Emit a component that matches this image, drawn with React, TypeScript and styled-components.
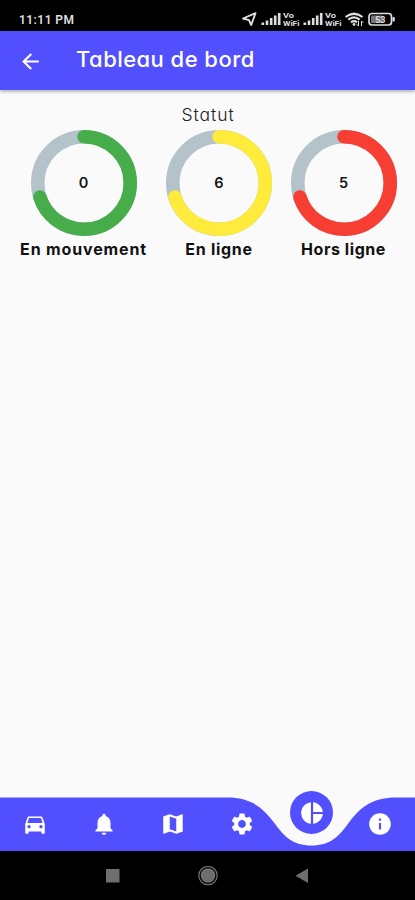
import React from 'react';
import styled, { createGlobalStyle } from 'styled-components';
import {
  MdArrowBack,
  MdDirectionsCar,
  MdInfo,
  MdMap,
  MdNotifications,
  MdPieChart,
  MdSettings,
} from 'react-icons/md';

const GlobalStyle = createGlobalStyle`
  * { box-sizing: border-box; }
  body { margin: 0; background: #fafafa; }
`;

const Screen = styled.div`
  width: 415px;
  height: 900px;
  display: flex;
  flex-direction: column;
  overflow: hidden;
  background: #fafafa;
  font-family: Inter, 'Noto Sans', sans-serif;
  font-feature-settings: 'cv11' 1;
`;

const StatusBar = styled.div`
  height: 31px;
  flex: none;
  display: flex;
  align-items: flex-end;
  justify-content: space-between;
  padding: 0 19px 3px 19px;
  background: #000;
  color: #dedede;
`;

const Clock = styled.span`
  font: 600 12px/15px Roboto, sans-serif;
  letter-spacing: 0.45px;
`;

const StatusIcons = styled.svg`
  display: block;
  width: 155px;
  height: 17px;
`;

const AppBar = styled.header`
  height: 59px;
  flex: none;
  display: flex;
  align-items: center;
  padding: 2px 0 0 18px;
  background: #524fff;
  color: #fff;
  box-shadow: 0 1px 4px rgba(0, 0, 0, 0.4);
  z-index: 1;

  svg { width: 25px; height: 25px; }
`;

const Title = styled.h1`
  margin: -5px 0 0 33px;
  font-size: 22px;
  line-height: 28px;
  font-weight: 500;
  letter-spacing: 0.45px;
  white-space: nowrap;
`;

const Content = styled.main`
  flex: 1;
  padding: 13px 0 0 1px;
`;

const SectionTitle = styled.h2`
  margin: 0;
  height: 27px;
  text-align: center;
  font-size: 17.5px;
  line-height: 24px;
  font-weight: 300;
  letter-spacing: 0.95px;
  color: #222;
`;

const Gauges = styled.div`
  display: flex;
  justify-content: space-evenly;
`;

const Gauge = styled.div<{ $width: number }>`
  width: ${(p) => p.$width}px;
  display: flex;
  flex-direction: column;
  align-items: center;
`;

const Dial = styled.div`
  display: grid;
  place-items: center;
  width: 106px;
  height: 106px;

  > * { grid-area: 1 / 1; }
`;

const Value = styled.span`
  font-size: 14.5px;
  line-height: 20px;
  font-weight: 600;
  color: #151515;
`;

const Label = styled.span<{ $spacing: number }>`
  margin-top: 2px;
  font-size: 16px;
  line-height: 22px;
  font-weight: 700;
  letter-spacing: ${(p) => p.$spacing}px;
  white-space: nowrap;
  color: #111;
`;

const NavBar = styled.nav`
  position: relative;
  height: 53.4px;
  flex: none;
`;

const NavShape = styled.svg`
  position: absolute;
  inset: 0;
  width: 415px;
  height: 54px;
`;

const NavItems = styled.div`
  position: relative;
  height: 100%;
  display: grid;
  grid-template-columns: repeat(6, 1fr);
  align-items: center;
  justify-items: center;
  color: #fff;

  svg { width: 26px; height: 26px; }
`;

const ActiveItem = styled.div`
  display: grid;
  place-items: center;
  width: 43px;
  height: 43px;
  margin: -23px 0 0 1px;
  border-radius: 50%;
  background: #524fff;
`;

const SystemBar = styled.div`
  height: 49.3px;
  flex: none;
  background: #000;

  svg { display: block; }
`;

const RADIUS = 46.25;
const LENGTH = 2 * Math.PI * RADIUS;

const gauges = [
  { label: 'En mouvement', value: 0, color: '#47ad4b', width: 128, spacing: 0.85 },
  { label: 'En ligne', value: 6, color: '#ffeb3b', width: 106, spacing: 0.7 },
  { label: 'Hors ligne', value: 5, color: '#f73e32', width: 106, spacing: 0.55 },
];

function Ring({ color }: { color: string }) {
  return (
    <svg width="106" height="106" viewBox="0 0 106 106" fill="none" strokeWidth="13.5">
      <circle cx="53" cy="53" r={RADIUS} stroke="#b3c3c9" />
      <circle
        cx="53"
        cy="53"
        r={RADIUS}
        stroke={color}
        strokeLinecap="round"
        strokeDasharray={`${LENGTH * 0.7} ${LENGTH}`}
        transform="rotate(-90 53 53)"
      />
    </svg>
  );
}

function Signal({ x }: { x: number }) {
  return (
    <g transform={`translate(${x} 0)`} fill="#dedede">
      <rect x="0" y="11.5" width="2.6" height="2.5" />
      <rect x="4.2" y="9.5" width="2.6" height="4.5" />
      <rect x="8.4" y="7" width="2.6" height="7" />
      <rect x="12.4" y="4.5" width="2.6" height="9.5" />
      <rect x="16.4" y="2" width="2.6" height="12" />
    </g>
  );
}

function VoWifi({ x }: { x: number }) {
  return (
    <g fill="#dedede" fontFamily="Roboto, sans-serif" fontWeight="700">
      <text x={x} y="6.6" fontSize="7.5" textLength="11" lengthAdjust="spacingAndGlyphs">Vo</text>
      <text x={x} y="14.5" fontSize="7.5" textLength="16.5" lengthAdjust="spacingAndGlyphs">WiFi</text>
    </g>
  );
}

export default function App() {
  return (
    <>
      <GlobalStyle />
      <Screen>
        <StatusBar>
          <Clock>11:11 PM</Clock>
          <StatusIcons viewBox="0 0 155 17">
            <path d="M2 7.5 14.5 2.2 10.2 14 8 9.2Z" fill="none" stroke="#dedede" strokeWidth="1.9" strokeLinejoin="round" />
            <Signal x={20.5} />
            <VoWifi x={42} />
            <Signal x={62.5} />
            <VoWifi x={84} />
            <g fill="none" stroke="#dedede" strokeWidth="2.2">
              <path d="M104.5 6q8.5-6.5 17 0" />
              <path d="M107.3 8.7q5.7-4.5 11.4 0" />
              <path d="M110 11.3q3-2.4 6 0" />
            </g>
            <circle cx="113" cy="13.4" r="1.4" fill="#dedede" />
            <path d="M117.5 10v5m-1.8-1.8 1.8 1.8m3-5v5m0-5 1.8 1.8" fill="none" stroke="#dedede" strokeWidth="1" />
            <rect x="128" y="2.5" width="22.5" height="11.5" rx="3" fill="none" stroke="#dedede" strokeWidth="1.7" />
            <rect x="151.5" y="6" width="2.3" height="4.5" rx="1" fill="#dedede" />
            <rect x="130" y="4.5" width="12" height="7.5" rx="1" fill="#777" />
            <text x="139.3" y="11.5" textAnchor="middle" fontSize="9" fontWeight="700" fontFamily="Roboto, sans-serif" fill="#dedede">53</text>
          </StatusIcons>
        </StatusBar>
        <AppBar>
          <MdArrowBack />
          <Title>Tableau de bord</Title>
        </AppBar>
        <Content>
          <SectionTitle>Statut</SectionTitle>
          <Gauges>
            {gauges.map((g) => (
              <Gauge key={g.label} $width={g.width}>
                <Dial>
                  <Ring color={g.color} />
                  <Value>{g.value}</Value>
                </Dial>
                <Label $spacing={g.spacing}>{g.label}</Label>
              </Gauge>
            ))}
          </Gauges>
        </Content>
        <NavBar>
          <NavShape viewBox="0 0 415 54">
            <path
              d="M0 .6H227C250 .6 262 9.500 274 25.500C284 39.500 293 48.500 311.500 48.500C330 48.500 339 39.500 349 25.500C361 9.500 373 .6 396 .6H415V54H0Z"
              fill="#524fff"
            />
          </NavShape>
          <NavItems>
            <MdDirectionsCar />
            <MdNotifications />
            <MdMap />
            <MdSettings />
            <ActiveItem>
              <MdPieChart />
            </ActiveItem>
            <MdInfo />
          </NavItems>
        </NavBar>
        <SystemBar>
          <svg width="415" height="49" viewBox="0 0 415 49" fill="#6e6e6e">
            <rect x="106" y="18" width="13.5" height="13.5" />
            <circle cx="208" cy="24.5" r="7.3" />
            <circle cx="208" cy="24.5" r="9.2" fill="none" stroke="#6e6e6e" strokeWidth="1.3" />
            <path d="M295.5 24.8 308 17.5V32Z" />
          </svg>
        </SystemBar>
      </Screen>
    </>
  );
}
